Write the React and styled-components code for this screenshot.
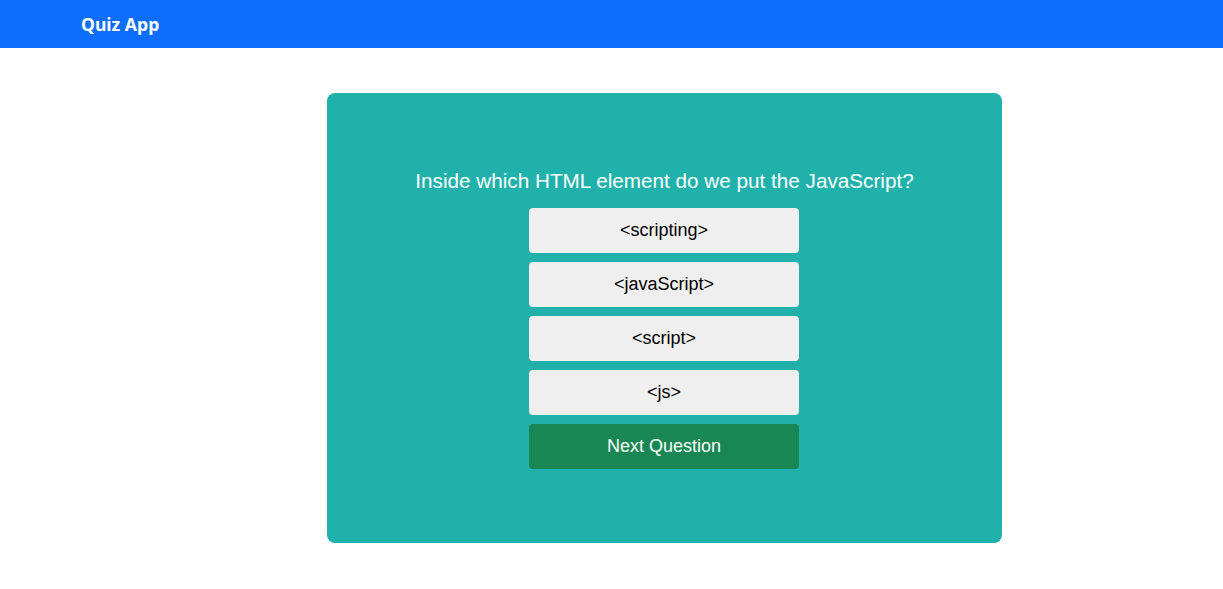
import React from "react";
import styled, { createGlobalStyle } from "styled-components";

const GlobalStyle = createGlobalStyle`
  body {
    margin: 0;
    background: #ffffff;
    font-family: "Liberation Sans", Arial, sans-serif;
  }
`;

const Navbar = styled.nav`
  height: 48px;
  background: #0d6efd;
  display: flex;
  align-items: center;
  padding-left: 81px;
  .brand {
    color: #ffffff;
    font-family: "Noto Sans", "Open Sans", sans-serif;
    font-weight: 700;
    font-size: 17.6px;
  }
`;

const Main = styled.main`
  display: flex;
  justify-content: center;
  padding-top: 45px;
  padding-left: 106px;
`;

const Card = styled.div`
  width: 675px;
  height: 450px;
  background: #20b2aa;
  border-radius: 8px;
  display: flex;
  flex-direction: column;
  align-items: center;
  justify-content: center;
  padding-top: 1px;
  box-sizing: border-box;
`;

const Question = styled.h2`
  margin: 0 0 16px;
  color: #ffffff;
  font-weight: 400;
  font-size: 20.7px;
  line-height: 23px;
`;

const Options = styled.div`
  display: flex;
  flex-direction: column;
  gap: 9px;
  margin-right: 1px;
`;

const Option = styled.button`
  width: 270px;
  height: 45px;
  border: none;
  border-radius: 4px;
  background: ${(p) => (p.$primary ? "#198754" : "#efefef")};
  color: ${(p) => (p.$primary ? "#ffffff" : "#000000")};
  font-family: "Liberation Sans", Arial, sans-serif;
  font-size: 18px;
  cursor: pointer;
`;

const answers = ["<scripting>", "<javaScript>", "<script>", "<js>"];

const App = () => {
  return (
    <>
      <GlobalStyle />
      <Navbar>
        <span className="brand">Quiz App</span>
      </Navbar>
      <Main>
        <Card>
          <Question>Inside which HTML element do we put the JavaScript?</Question>
          <Options>
            {answers.map((a) => (
              <Option key={a}>{a}</Option>
            ))}
            <Option $primary>Next Question</Option>
          </Options>
        </Card>
      </Main>
    </>
  );
};

export default App;
